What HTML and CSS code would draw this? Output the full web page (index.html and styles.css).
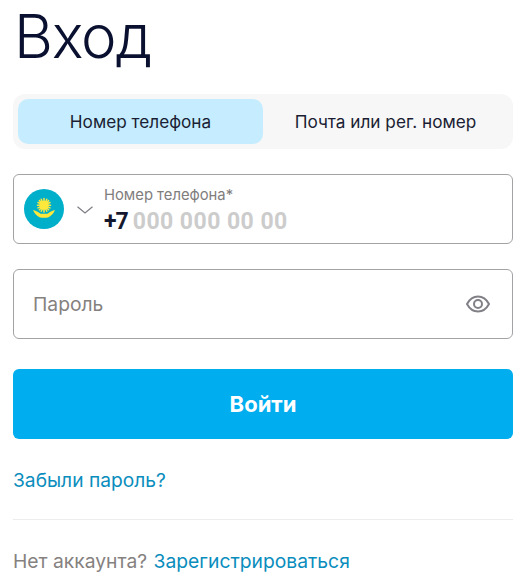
FILE: index.html
```html
<!DOCTYPE html>
<html lang="ru">
<head>
<meta charset="utf-8">
<title>Вход</title>
<link rel="stylesheet" href="styles.css">
</head>
<body>
<main class="page">
  <h1 class="title">Вход</h1>
  <div class="tabs">
    <div class="tab tab-active">Номер телефона</div>
    <div class="tab">Почта или рег. номер</div>
  </div>
  <div class="field phone-field">
    <svg class="flag" viewBox="0 0 40 40" width="40" height="40" aria-hidden="true">
      <circle cx="20" cy="20" r="20" fill="#00afca"/>
      <g stroke="#ffe83c" stroke-width="1.500" stroke-linecap="round">
        <path d="M20 9.500V23M13.500 16.200H26.500M15.400 11.600L24.600 20.800M24.600 11.600L15.400 20.800M17.200 10.200L22.800 22.200M22.800 10.200L17.200 22.200M14 13.500L26 18.900M26 13.500L14 18.900"/>
      </g>
      <circle cx="20" cy="16.200" r="4.500" fill="#ffe83c"/>
      <path d="M9 21C12.500 22 15 23.500 16.500 24.800H23.500C25 23.500 27.500 22 31 21C29.600 24.800 27 27 24.600 28.200C22 29 18 29 15.400 28.200C13 27 10.400 24.800 9 21Z" fill="#ffe83c"/>
    </svg>
    <svg class="chevron" viewBox="0 0 16 8" width="16" height="8" aria-hidden="true"><path d="M0.500 0.700L8 6.900L15.500 0.700" fill="none" stroke="#7d7d85" stroke-width="1.200"/></svg>
    <div class="phone-text">
      <div class="phone-label">Номер телефона*</div>
      <div class="phone-value"><span class="code">+7</span><span class="mask">000 000 00 00</span></div>
    </div>
  </div>
  <div class="field password-field">
    <span class="placeholder">Пароль</span>
    <svg class="eye" viewBox="0 0 24 18" width="24" height="18" aria-hidden="true">
      <path d="M1 9C3.500 4.300 7.500 1.500 12 1.500S20.500 4.300 23 9C20.500 13.700 16.500 16.500 12 16.500S3.500 13.700 1 9Z" fill="none" stroke="#808087" stroke-width="2"/>
      <circle cx="12" cy="9" r="4" fill="none" stroke="#808087" stroke-width="2"/>
    </svg>
  </div>
  <button class="submit" type="button">Войти</button>
  <a class="link forgot" href="#">Забыли пароль?</a>
  <hr class="divider">
  <p class="register">Нет аккаунта? <a class="link register-link" href="#">Зарегистрироваться</a></p>
</main>
</body>
</html>
```
FILE: styles.css
```css
* { box-sizing: border-box; }
html, body { margin: 0; padding: 0; background: #fff; }
body { font-family: "Inter", "Noto Sans", sans-serif; color: #0b1133; overflow: hidden; }
.page { width: 526px; height: 586px; padding: 0 13px; display: flex; flex-direction: column; }
.title { margin: 0 0 0 1px; height: 94px; font-size: 60px; line-height: 73px; font-weight: 350; letter-spacing: -1.200px; color: #0a1030; }
.tabs { display: flex; height: 55px; padding: 5px; background: #f7f7f7; border-radius: 12px; }
.tab { flex: 1; display: flex; align-items: center; justify-content: center; border-radius: 10px; font-size: 17.200px; color: #1a1d33; }
.tab-active { background: #c5edff; }
.field { height: 70px; border: 1px solid #a3a3a6; border-radius: 6px; display: flex; align-items: center; background: #fff; }
.phone-field { margin-top: 25px; padding-left: 10px; }
.flag { flex: none; }
.chevron { flex: none; margin: 2px 0 0 13px; }
.phone-text { margin-left: 11px; padding-top: 6px; }
.phone-label { font-size: 14.800px; line-height: 16px; color: #807d7d; }
.phone-value { display: flex; gap: 5px; margin-top: 4px; font-family: "Roboto", sans-serif; font-size: 23px; line-height: 30px; font-weight: 700; color: #ccc; white-space: nowrap; }
.code { color: #14182f; letter-spacing: -1px; }
.mask { letter-spacing: 0.450px; }
.password-field { margin-top: 25px; padding: 0 22px 0 19px; justify-content: space-between; }
.placeholder { font-size: 19.300px; color: #85817f; }
.submit { margin-top: 30px; height: 70px; border: 0; border-radius: 6px; background: #00aeef; color: #fff; font: 700 22px "Inter", sans-serif; }
.link { color: #0a8dbd; text-decoration: none; }
.forgot { margin-top: 29px; font-size: 19.200px; line-height: 24px; }
.divider { margin: 27px 0 0; width: 100%; border: 0; border-top: 1px solid #ececee; }
.register { margin: 29px 0 0; font-size: 19.300px; line-height: 24px; color: #85817f; }
.register-link { margin-left: 1px; }
```
